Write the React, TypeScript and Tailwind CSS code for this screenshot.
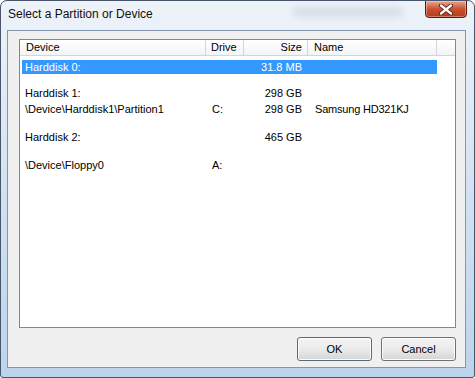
const body = { fontFamily: '"Liberation Sans", Arial, sans-serif' }

type Row = { device: string; drive?: string; size?: string; name?: string; selected?: boolean; mt: string }

const rows: Row[] = [
  { device: 'Harddisk 0:', size: '31.8 MB', selected: true, mt: 'mt-[4px]' },
  { device: 'Harddisk 1:', size: '298 GB', mt: 'mt-[12px]' },
  { device: '\\Device\\Harddisk1\\Partition1', drive: 'C:', size: '298 GB', name: 'Samsung HD321KJ', mt: 'mt-[2px]' },
  { device: 'Harddisk 2:', size: '465 GB', mt: 'mt-[14px]' },
  { device: '\\Device\\Floppy0', drive: 'A:', mt: 'mt-[14px]' },
]

function CloseButton() {
  return (
    <div className="ml-auto mr-[7px] -mt-px w-[42px] h-[18px] rounded-b-[4px] border border-[#5a1a0c] bg-gradient-to-b from-[#e9a58f] via-[#c8512f] to-[#b8391c] flex items-center justify-center shadow-[inset_0_0_0_1px_rgba(255,255,255,0.35)]">
      <svg width="14" height="11" viewBox="0 0 14 11">
        <path d="M2 1.5 L12 9.5 M12 1.5 L2 9.5" stroke="#4a1508" strokeWidth="4" strokeLinecap="round" />
        <path d="M2 1.5 L12 9.5 M12 1.5 L2 9.5" stroke="#ffffff" strokeWidth="2.4" strokeLinecap="round" />
      </svg>
    </div>
  )
}

function Button({ label, isDefault }: { label: string; isDefault?: boolean }) {
  return (
    <div
      className={`w-[75px] h-[24px] rounded-[3px] border ${isDefault ? 'border-[#5a6a7a]' : 'border-[#707070]'} bg-gradient-to-b from-[#f3f3f3] via-[#ebebeb] to-[#d4d4d4] shadow-[inset_0_0_0_1px_#fcfcfc] flex items-center justify-center text-[11px] text-black`}
    >
      {label}
    </div>
  )
}

export default function App() {
  return (
    <div
      className="w-[475px] h-[378px] flex flex-col rounded-t-[7px] rounded-b-[3px] border border-[#47566a] bg-gradient-to-b from-[#eef3f9] via-[#d3e2f1] to-[#bcd4ec] overflow-hidden"
      style={body}
    >
      {/* Title bar */}
      <div className="h-[29px] flex items-start shrink-0">
        <div className="pl-[7px] pt-[6px] text-[12px] leading-[14px] text-[#101010]">Select a Partition or Device</div>
        <div className="ml-[140px] mt-[6px] w-[110px] h-[10px] rounded-full bg-[#b9c3cf] opacity-40 blur-[3px]" />
        <CloseButton />
      </div>

      {/* Client area */}
      <div className="ml-[6px] w-[459px] h-[338px] border border-[#8396ad] bg-[#f0f0f0] flex flex-col pl-[11px] pt-[8px]">
        {/* List view */}
        <div className="w-[437px] h-[289px] border border-[#828790] bg-white flex flex-col text-[11px] leading-[13px] text-black">
          <div className="h-[16px] flex border-b border-[#d5d5d5] bg-gradient-to-b from-[#ffffff] to-[#f3f4f6]">
            <div className="w-[186px] border-r border-[#d5d5d5] pl-[6px] pt-[1px]">Device</div>
            <div className="w-[38px] border-r border-[#d5d5d5] pl-[5px] pt-[1px]">Drive</div>
            <div className="w-[64px] border-r border-[#d5d5d5] pr-[5px] pt-[1px] text-right">Size</div>
            <div className="w-[129px] border-r border-[#d5d5d5] pl-[6px] pt-[1px]">Name</div>
            <div className="flex-1" />
          </div>
          {rows.map((r, i) => (
            <div
              key={i}
              className={`${i === 0 ? 'mt-[4px]' : r.mt} ml-[2px] w-[415px] h-[14px] flex items-center ${r.selected ? 'bg-[#3399ff] text-white' : ''}`}
            >
              <div className="w-[184px] pl-[3px] whitespace-nowrap">{r.device}</div>
              <div className="w-[38px] pl-[6px]">{r.drive}</div>
              <div className="w-[64px] pr-[6px] text-right">{r.size}</div>
              <div className="w-[129px] pl-[7px] whitespace-nowrap tracking-[-0.2px]">{r.name}</div>
            </div>
          ))}
        </div>

        {/* Buttons */}
        <div className="mt-[9px] w-[437px] flex justify-end gap-[9px]">
          <Button label="OK" isDefault />
          <Button label="Cancel" />
        </div>
      </div>
    </div>
  )
}
